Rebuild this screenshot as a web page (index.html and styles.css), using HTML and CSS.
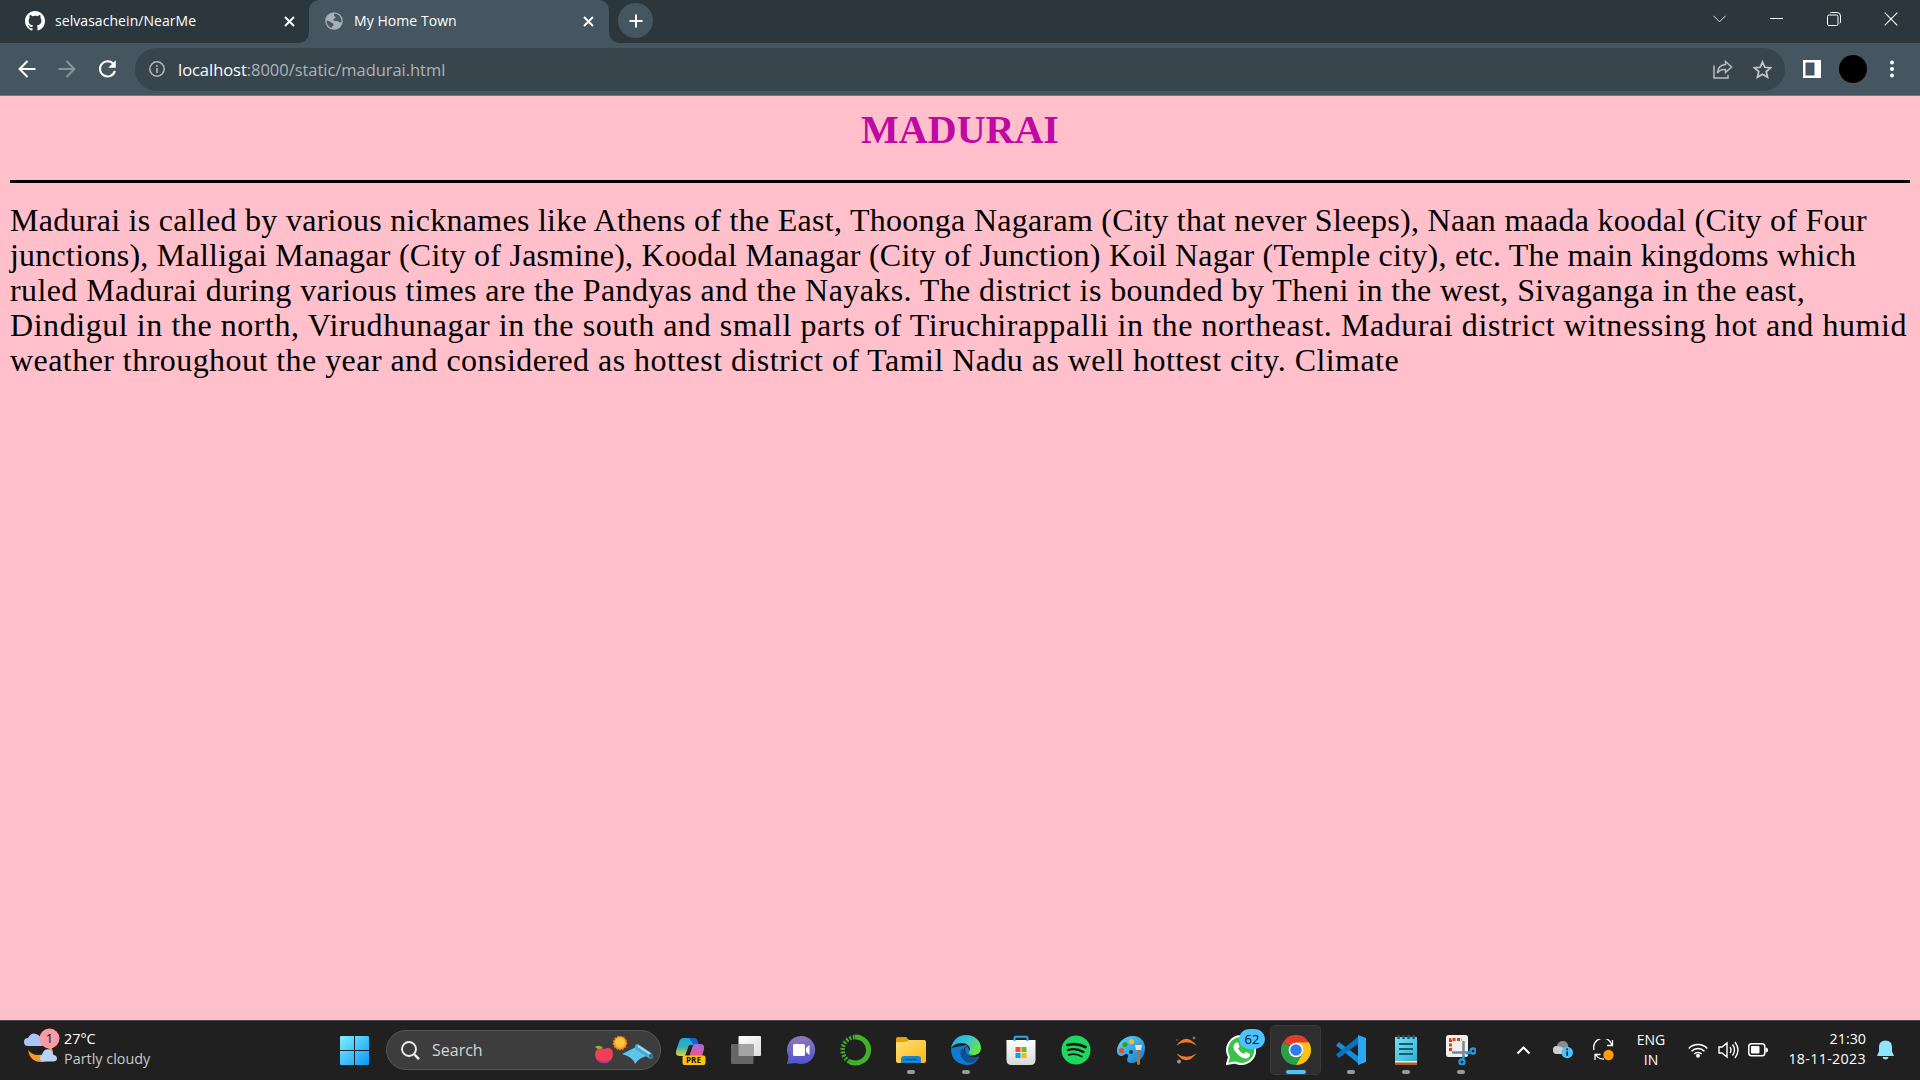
FILE: index.html
```html
<!DOCTYPE html>
<html lang="en">
<head>
<meta charset="utf-8">
<title>My Home Town</title>
<link rel="stylesheet" href="styles.css">
</head>
<body>
<div class="screen">
  <header class="tabstrip">
    <div class="tab tab-github">
      <svg class="fav" width="20" height="20" viewBox="0 0 16 16" fill="#fff"><path d="M8 0C3.58 0 0 3.58 0 8c0 3.54 2.29 6.53 5.47 7.59.4.07.55-.17.55-.38 0-.19-.01-.82-.01-1.49-2.01.37-2.53-.49-2.69-.94-.09-.23-.48-.94-.82-1.13-.28-.15-.68-.52-.01-.53.63-.01 1.08.58 1.23.82.72 1.21 1.87.87 2.33.66.07-.52.28-.87.51-1.07-1.78-.2-3.64-.89-3.64-3.95 0-.87.31-1.59.82-2.15-.08-.2-.36-1.02.08-2.12 0 0 .67-.21 2.2.82A7.4 7.4 0 0 1 8 3.86c.68 0 1.36.09 2 .27 1.53-1.04 2.2-.82 2.2-.82.44 1.1.16 1.92.08 2.12.51.56.82 1.27.82 2.15 0 3.07-1.87 3.75-3.65 3.95.29.25.54.73.54 1.48 0 1.07-.01 1.93-.01 2.2 0 .21.15.46.55.38A8.01 8.01 0 0 0 16 8c0-4.42-3.58-8-8-8z"/></svg>
      <span class="tab-title">selvasachein/NearMe</span>
      <svg class="close" width="11" height="11" viewBox="0 0 11 11"><path d="M1 1l9 9M10 1l-9 9" stroke="#fff" stroke-width="1.9"/></svg>
    </div>
    <div class="tab tab-active">
      <svg class="fav" width="18" height="18" viewBox="0 0 18 18"><circle cx="9" cy="9" r="8.8" fill="#a9afb6"/><path d="M9.500 1.500c-1 1.800-.5 3 .5 3.200s.8 1.500-.6 1.800-1.400 1.700-.2 2.200 3.300-.3 4.200.9c.7 1 2.400.8 3.100.3a7.600 7.600 0 0 0-7-8.400zM1.600 8.500c2 .3 3.200.8 4.700 2.100 1.200 1.100 2.700.8 2.200 2.500-.4 1.400-1.700 1.200-1.600 2.900A7.500 7.500 0 0 1 1.600 8.500z" fill="#4a5961"/></svg>
      <span class="tab-title">My Home Town</span>
      <svg class="close" width="11" height="11" viewBox="0 0 11 11"><path d="M1 1l9 9M10 1l-9 9" stroke="#fff" stroke-width="1.9"/></svg>
    </div>
    <div class="newtab"><svg width="14" height="14" viewBox="0 0 14 14"><path d="M7 .5v13M.5 7h13" stroke="#fff" stroke-width="2"/></svg></div>
    <div class="window-controls">
      <svg class="search-tabs" width="13" height="8" viewBox="0 0 13 8"><path d="M.5.8l6 6 6-6" fill="none" stroke="#dfe2e4"/></svg>
      <svg class="minimize" width="13" height="8" viewBox="0 0 13 8"><path d="M0 3.500h13" stroke="#fff"/></svg>
      <svg width="14" height="14" viewBox="0 0 14 14" fill="none" stroke="#fff"><rect x=".5" y="3" width="10.500" height="10.500" rx="1.500"/><path d="M3 1.200Q3.400.5 4.500.5H10Q13.500.5 13.500 4v6q0 1-.8 1.300"/></svg>
      <svg width="14" height="14" viewBox="0 0 14 14"><path d="M.7.700l12.600 12.600M13.300.700L.7 13.300" stroke="#fff" stroke-width="1.100"/></svg>
    </div>
  </header>

  <nav class="toolbar">
    <svg class="nav-back" width="18" height="18" viewBox="0 0 18 18"><path d="M17.500 9H2M9.500 1L1.600 9l7.900 8" fill="none" stroke="#fff" stroke-width="2"/></svg>
    <svg class="nav-fwd" width="18" height="18" viewBox="0 0 18 18"><path d="M.5 9H16M8.500 1l7.900 8-7.900 8" fill="none" stroke="#89959b" stroke-width="2"/></svg>
    <svg class="nav-reload" width="19" height="20" viewBox="0 0 20 20"><path d="M16.600 5.200A8 8 0 1 0 17.800 12" fill="none" stroke="#fff" stroke-width="2.200"/><path d="M18.700.800v8h-8z" fill="#fff"/></svg>
    <div class="omnibox">
      <svg width="16" height="16" viewBox="0 0 16 16"><circle cx="8" cy="8" r="7.200" fill="none" stroke="#b4babd" stroke-width="1.500"/><path d="M8 7v5M8 4v1.800" stroke="#b4babd" stroke-width="1.600"/></svg>
      <span class="url"><b>localhost</b>:8000/static/madurai.html</span>
      <svg class="share" width="20" height="19" viewBox="0 0 20 19" fill="none" stroke="#b8bdc0" stroke-width="1.500"><path d="M1 5.500V18h14v-3"/><path d="M12.500 1.500L18.500 7l-6 5.500V9.500Q7 9 4.500 13 5 5 12.500 4.500z"/></svg>
      <svg class="star" width="19" height="19" viewBox="0 0 24 24"><path d="M12 2.500l2.900 6.700 7.300.7-5.500 4.800 1.700 7.100L12 18l-6.400 3.800 1.700-7.100-5.500-4.800 7.300-.7z" fill="none" stroke="#c3c7c9" stroke-width="2.200"/></svg>
    </div>
    <svg class="panel" width="18" height="18" viewBox="0 0 18 18"><path fill-rule="evenodd" fill="#fff" d="M0 0h18v18H0zM2.500 2.500v13h9v-13z"/></svg>
    <span class="avatar"></span>
    <svg class="more" width="6" height="18" viewBox="0 0 6 18" fill="#fff"><circle cx="3" cy="2.500" r="2"/><circle cx="3" cy="9" r="2"/><circle cx="3" cy="15.500" r="2"/></svg>
  </nav>

  <main class="page">
    <h1>MADURAI</h1>
    <hr>
    <p>
      <span class="line l1">Madurai is called by various nicknames like Athens of the East, Thoonga Nagaram (City that never Sleeps), Naan maada koodal (City of Four</span>
      <span class="line l2">junctions), Malligai Managar (City of Jasmine), Koodal Managar (City of Junction) Koil Nagar (Temple city), etc. The main kingdoms which</span>
      <span class="line l3">ruled Madurai during various times are the Pandyas and the Nayaks. The district is bounded by Theni in the west, Sivaganga in the east,</span>
      <span class="line l4">Dindigul in the north, Virudhunagar in the south and small parts of Tiruchirappalli in the northeast. Madurai district witnessing hot and humid</span>
      <span class="line l5">weather throughout the year and considered as hottest district of Tamil Nadu as well hottest city. Climate</span>
    </p>
  </main>

  <footer class="taskbar">
    <div class="weather">
      <svg width="40" height="40" viewBox="0 0 40 40"><path d="M28 14q3 14-12 14-6 0-10-5 2 12 13 12 9 0 12-10z" fill="#f39a27"/><path d="M22 9q8 3 10 10l-5 4z" fill="#f5b32c"/><path d="M6 19a4 4 0 0 1 0-8q3-6 8-4 4 1 5 5 4 1 4 4 0 3-4 3z" fill="#a9c5f5"/><path d="M20 34.500a4 4 0 0 1 0-7q2-6 7-5 4 1 4 5 4 1 4 4 0 3-4 3z" fill="#b9d3f8"/><circle cx="27.500" cy="11.500" r="10" fill="#ff99a4"/></svg>
      <span class="weather-count">1</span>
      <div class="weather-text"><span class="temp">27°C</span><span class="cond">Partly cloudy</span></div>
    </div>
    <svg class="start" width="29" height="29" viewBox="0 0 29 29"><defs><linearGradient id="win" x1="0" y1="0" x2="29" y2="29" gradientUnits="userSpaceOnUse"><stop offset="0" stop-color="#7df0ff"/><stop offset="1" stop-color="#0a96fa"/></linearGradient></defs><path fill="url(#win)" d="M0 1q0-1 1-1h13v14H0zM15 0h13q1 0 1 1v13H15zM0 15h14v14H1q-1 0-1-1zM15 15h14v13q0 1-1 1H15z"/></svg>
    <div class="search">
      <svg width="19" height="19" viewBox="0 0 19 19" fill="none" stroke="#eee"><circle cx="8" cy="8" r="7" stroke-width="1.900"/><path d="M13 13l5 5.200" stroke-width="2.500"/></svg>
      <span>Search</span>
      <svg class="highlight" width="60" height="30" viewBox="0 0 60 30"><path d="M1 12q5-3 8 1-4 3-8-1z" fill="#83b92b"/><path d="M10 14q8-3 9 4 0 9-8 10Q2 28 1 20q0-8 9-6z" fill="#ee4057"/><path d="M3 24q7 4 14 0-3 5-7 4-5 0-7-4z" fill="#b63a91"/><circle cx="26" cy="8" r="6.500" fill="#f6a01b" stroke="#ef7c15" stroke-width="1.500" stroke-dasharray="2 1"/><circle cx="26" cy="7.500" r="5" fill="#fdc73c"/><path d="M28 19l14-7 11 9q-7 1-12 8-2-7-13-10z" fill="#5cc6ea"/><path d="M44 9l12 8q4 3 3 6-3 2-6-1L41 14q-1-5 3-5z" fill="#4ba9d1"/><path d="M44 11l12 8" stroke="#a7e4f8" stroke-width="2"/><circle cx="57" cy="21" r="2" fill="#286d91"/></svg>
    </div>
    <div class="apps">
      <div class="app"><svg width="30" height="30" viewBox="0 0 30 30"><defs><linearGradient id="cp1" x2="0" y2="1"><stop stop-color="#1aa6e8"/><stop offset=".5" stop-color="#35b1ad"/><stop offset="1" stop-color="#e6d53e"/></linearGradient><linearGradient id="cp2" x2="0" y2="1"><stop stop-color="#9b6be8"/><stop offset="1" stop-color="#fb5277"/></linearGradient></defs><path d="M8 3h9q4 0 5 5l1 3h-5q-2 0-3 3l-2 5q-1 2-4 2H4q-5 0-4-5l3-9q1-4 5-4z" fill="url(#cp1)"/><path d="M13 3h4q4 0 5 5l1 3h-5L15 6z" fill="#1662d4"/><path d="M13 10h5l-5 11H9z" fill="#202020"/><path d="M19 9h5q5 0 4 5l-2 8H13l3-9q1-4 3-4z" fill="url(#cp2)"/><rect x="6.500" y="20.500" width="23" height="9.500" rx="2" fill="#ffc20e"/></svg><b class="pre">PRE</b></div>
      <div class="app"><svg width="30" height="30" viewBox="0 0 30 30"><defs><linearGradient id="tv" x2="1" y2="1"><stop stop-color="#fff"/><stop offset="1" stop-color="#ddd"/></linearGradient></defs><rect x="7.500" y="1" width="22.500" height="20" rx="1" fill="url(#tv)"/><rect x="0" y="9" width="22.500" height="20" rx="1" fill="#666"/><path d="M7.500 9h15v12h-15z" fill="#a4a4a4"/></svg></div>
      <div class="app"><svg width="30" height="30" viewBox="0 0 30 30"><defs><linearGradient id="ch" x2="0" y2="1"><stop stop-color="#9277b9"/><stop offset="1" stop-color="#4d55d0"/></linearGradient></defs><path d="M15 1a14 14 0 1 1-5 27L1 29l1.500-7.500A14 14 0 0 1 15 1z" fill="url(#ch)"/><rect x="7" y="9" width="12" height="12" rx="1.500" fill="#fff"/><path d="M20 13l3.500-3v10L20 17z" fill="#fff"/></svg></div>
      <div class="app"><svg width="32" height="32" viewBox="0 0 32 32" fill="none" stroke="#43b02a"><path d="M15 3a13 13 0 1 1-5.500 24.500" stroke-width="5"/><path d="M9.500 27.500A13 13 0 0 1 15 3" stroke-width="4.500" stroke-dasharray="2 1.500"/><path d="M7 27A14 14 0 0 1 13 1.500M9 23A10 10 0 0 1 13 6" stroke="#202020" stroke-width="1" stroke-dasharray="2 2"/></svg></div>
      <div class="app"><svg width="30" height="30" viewBox="0 0 30 30"><defs><linearGradient id="fo" x2="1" y2="1"><stop stop-color="#ffe079"/><stop offset="1" stop-color="#f9b810"/></linearGradient></defs><path d="M0 4q0-2 2-2h8l3 3v5H0z" fill="#e5a100"/><path d="M0 7h10l3-2h15q2 0 2 2v19q0 2-2 2H2q-2 0-2-2z" fill="url(#fo)"/><path d="M5 28v-4q0-3 3-3h14q3 0 3 3v4z" fill="#1a84d2"/><path d="M9 24.500h12" stroke="#0d589c" stroke-width="1.500"/></svg><i class="dot"></i></div>
      <div class="app"><svg width="30" height="30" viewBox="0 0 30 30"><defs><linearGradient id="ed" x2="1" y2=".5"><stop stop-color="#23a9e8"/><stop offset=".5" stop-color="#35c2d7"/><stop offset="1" stop-color="#65e34c"/></linearGradient></defs><path d="M0 13q0 9 5 13 5 4 12 4 8-1 11-8l-8-2-4-10z" fill="#0c7cd3"/><path d="M0 13C2 4 8 0 15 0c9 0 15 6 15 13 0 5-4 7-7 7-4 0-6-1-5-3 3-5-2-9-7-9Q4 8 0 13z" fill="url(#ed)"/><path d="M18 12q-4-1-4 3 1 7 8 6 4 0 6-1-2 3-5 3-9 0-10-8 0-5 5-3z" fill="#202020"/><path d="M12 13q-4 3-2 8 3 7 9 7 6-1 9-7-4 2-8 1-6-2-7-7z" fill="#134e93"/></svg><i class="dot"></i></div>
      <div class="app"><svg width="30" height="30" viewBox="0 0 30 30"><defs><linearGradient id="st" x2="0" y2="1"><stop stop-color="#fff"/><stop offset="1" stop-color="#d9d9d9"/></linearGradient></defs><path d="M.5 5h29v20q0 5-5 5h-19q-5 0-5-5z" fill="url(#st)"/><path d="M8.500 6V3q0-1.200 1.200-1.200h10.600q1.200 0 1.200 1.200v3" fill="none" stroke="#28a8ea" stroke-width="2"/><path d="M9.500 12h5v5h-5z" fill="#f05023"/><path d="M15.500 12h5v5h-5z" fill="#7db902"/><path d="M9.500 18h5v5h-5z" fill="#04a4ef"/><path d="M15.500 18h5v5h-5z" fill="#fdb900"/></svg></div>
      <div class="app"><svg width="30" height="30" viewBox="0 0 30 30"><circle cx="15" cy="15" r="14.500" fill="#1ed760"/><g fill="none" stroke="#191414" stroke-linecap="round"><path d="M6.500 10q9-2.500 18 2" stroke-width="2.800"/><path d="M7 15q8-2.500 15.500 2" stroke-width="2.300"/><path d="M7.700 19.800q7-2 13 1.700" stroke-width="1.900"/></g></svg></div>
      <div class="app"><svg width="30" height="30" viewBox="0 0 30 30"><defs><linearGradient id="pa" x2="1" y2="1"><stop stop-color="#68d6f7"/><stop offset="1" stop-color="#1277cf"/></linearGradient></defs><path d="M17 1c8 0 12 6 12 12 0 9-6 15-14 15-5 0-4-4-3-6 1-3-2-4-4-2s-7 1-7-4C1 8 8 1 17 1z" fill="url(#pa)"/><circle cx="15.500" cy="6.500" r="2.600" fill="#fdc100"/><circle cx="9" cy="9.500" r="2.600" fill="#2ea32d"/><circle cx="5.500" cy="15.500" r="2.600" fill="#d9532c"/><circle cx="15" cy="17" r="2" fill="#123c5c"/><path d="M19 10h7l-1 5h-5z" fill="#f2dcc2"/><path d="M21 15h3v14q-1.500 2-3 0z" fill="#b87027"/></svg></div>
      <div class="app"><svg width="30" height="30" viewBox="0 0 30 30"><path d="M5.500 10.500q9.500-13.500 20 0-10-6.500-20 0zM5.500 18.500q9.500 13.500 20 0-10 6.500-20 0z" fill="#f37726"/><circle cx="23" cy="3" r="1.400" fill="#777"/><circle cx="6" cy="5" r="1" fill="#555"/><circle cx="8" cy="26.500" r="1.900" fill="#999"/></svg></div>
      <div class="app"><svg width="30" height="30" viewBox="0 0 30 30"><path d="M15 1a14 14 0 1 1-6 26.500L1 29l2-7A14 14 0 0 1 15 1z" fill="#38c44b" stroke="#fff" stroke-width="2"/><path d="M10 7.500q2-.5 2.500 1l1 3q0 1-1.500 2 2 4 6 5.500 1-2 2-2l4 2q0 4-4 4.500-4 0-8-4-5-4.500-4.500-8 .5-3 2.500-4z" fill="#fff"/></svg><span class="badge">62</span></div>
      <div class="app app-active"><svg width="30" height="30" viewBox="0 0 30 30"><path d="M15 15L2 7.500A15 15 0 0 1 28 7.500z" fill="#e43e2b"/><path d="M2 7.500A15 15 0 0 0 15 30l6.500-11.200L15 15z" fill="#2b9f49"/><path d="M28 7.500A15 15 0 0 1 15 30l6.500-11.200L15 7.500z" fill="#fbc116"/><circle cx="15" cy="15" r="7.300" fill="#fff"/><circle cx="15" cy="15" r="5.800" fill="#317bed"/></svg><i class="dot wide"></i></div>
      <div class="app"><svg width="30" height="30" viewBox="0 0 30 30"><path d="M3 7L23 22v7L0 10.500z" fill="#168cd7"/><path d="M3 23L23 8V1L0 19.500z" fill="#0874bd"/><path d="M22 0l8 3v24l-8 3z" fill="#2aa8f2"/></svg><i class="dot"></i></div>
      <div class="app"><svg width="30" height="30" viewBox="0 0 30 30"><defs><linearGradient id="np" x2="1" y2="1"><stop stop-color="#79dff0"/><stop offset="1" stop-color="#31b1d0"/></linearGradient></defs><path d="M4 26h22v4H4z" fill="#b45f21"/><path d="M4 25h22v2.500H4z" fill="#eee"/><path d="M4 2h22v24H4z" fill="url(#np)"/><path d="M7.500 0v4M12.500 0v4M17.500 0v4M22.500 0v4" stroke="#155e75" stroke-width="2.500"/><path d="M8 9h14M8 14h14M8 19h14" stroke="#105d79" stroke-width="2"/></svg><i class="dot"></i></div>
      <div class="app"><svg width="30" height="30" viewBox="0 0 30 30"><rect width="22" height="22" rx="2.500" fill="#f0f0f0"/><path d="M4.500 16V4.500H16" fill="none" stroke="#dc3e10" stroke-width="3" stroke-dasharray="3 1.500"/><path d="M17.500 6v16M6 17.500h17" stroke="#7d8791" stroke-width="2.500"/><g fill="none" stroke="#1d9ae0" stroke-width="2.300"><circle cx="27" cy="16" r="2.500"/><circle cx="16" cy="27" r="2.500"/><path d="M20 18.500l5-1M18 20.500l-1 4"/></g></svg><i class="dot"></i></div>
    </div>
    <div class="tray">
      <svg class="tray-up" width="15" height="10" viewBox="0 0 15 10"><path d="M1.500 8.500l6-6 6 6" fill="none" stroke="#fff" stroke-width="2"/></svg>
      <svg class="tray-cloud" width="20" height="18" viewBox="0 0 20 18"><path d="M4 13q-4 0-4-4t4-4q1-5 6-5 4 0 5 4l1 6-9 3z" fill="#8b8b8b"/><path d="M0 9q0-4 4-4 3 0 9 3l-4 5H4q-4 0-4-4z" fill="#cfcfcf"/><circle cx="14.200" cy="11.500" r="5.800" fill="#4cc2ff"/><path d="M14.200 10.500v4.200M14.200 7.500v1.800" stroke="#123" stroke-width="1.700"/></svg>
      <svg class="tray-sync" width="22" height="22" viewBox="0 0 22 22"><g fill="none" stroke="#fff" stroke-width="1.300"><path d="M1 11A9 9 0 0 1 19 6M19.500 1v5.500H14"/><path d="M2 21v-5.500h5.500M3 16q3 4.500 8 4"/></g><circle cx="15.500" cy="16" r="5.200" fill="#ff9a0a"/></svg>
      <div class="lang"><span>ENG</span><span>IN</span></div>
      <svg class="tray-wifi" width="20" height="16" viewBox="0 0 20 16" fill="none" stroke="#fff" stroke-width="1.500"><path d="M.7 6.500a13 13 0 0 1 18.600 0M3.500 9.300a9 9 0 0 1 13 0M6.300 12a5.200 5.200 0 0 1 7.400 0"/><circle cx="10" cy="13.800" r="1.200" fill="#fff"/></svg>
      <svg class="tray-vol" width="21" height="18" viewBox="0 0 21 18" fill="none" stroke="#fff" stroke-width="1.400"><path d="M1 6v6h3l5 4V2L4 6zM12 6q2 3 0 6M14.500 3.500q4 5.500 0 11M17 1q6 8 0 16"/></svg>
      <svg class="tray-bat" width="20" height="14" viewBox="0 0 20 14"><rect x=".8" y=".8" width="16" height="12" rx="2.800" fill="none" stroke="#fff" stroke-width="1.500"/><rect x="3" y="3" width="8.500" height="7.600" rx="1" fill="#fff"/><path d="M17.500 4.500q2.500 0 2.500 2.500t-2.500 2.500z" fill="#fff"/></svg>
      <div class="clock"><span class="time">21:30</span><span class="date">18-11-2023</span></div>
      <svg class="tray-bell" width="17" height="20" viewBox="0 0 17 20" fill="#8fe5ff"><path d="M8.500.500Q15 .500 15 7v4.500l1.700 3.500v1H.3v-1L2 11.500V7Q2 .500 8.500.500zM5.500 17h6q-.5 2.500-3 2.500t-3-2.500z"/></svg>
    </div>
  </footer>
</div>
</body>
</html>
```
FILE: styles.css
```css
* { box-sizing: border-box; }
html, body { margin: 0; }
body { width: 1920px; height: 1080px; overflow: hidden; font-family: "Open Sans", "Noto Sans", sans-serif; }
svg { display: block; flex: none; }
.screen { display: flex; flex-direction: column; height: 1080px; }

.tabstrip { display: flex; height: 43px; background: #2c373d; }
.tab { display: flex; align-items: center; height: 43px; padding-bottom: 1px; color: #fff; font-size: 14px; white-space: nowrap; }
.tab-github { width: 309px; padding-left: 25px; padding-right: 14px; }
.tab-active { position: relative; width: 300px; padding-left: 16px; padding-right: 15px; border-radius: 10px 10px 0 0; background: #455660; }
.tab-active::before, .tab-active::after { content: ""; position: absolute; bottom: 0; width: 10px; height: 10px; }
.tab-active::before { left: -10px; background: radial-gradient(circle at 0 0, #2c373d 9.5px, #455660 10px); }
.tab-active::after { right: -10px; background: radial-gradient(circle at 100% 0, #2c373d 9.5px, #455660 10px); }
.tab-title { flex: 1; margin-left: 10px; padding-bottom: 2px; letter-spacing: 0.06px; }
.tab-active .tab-title { margin-left: 11px; }
.newtab { display: flex; align-items: center; justify-content: center; width: 35px; height: 35px; margin: 3px 0 0 9px; border-radius: 50%; background: #455660; }
.window-controls { display: flex; align-items: center; gap: 43px; height: 37px; margin-left: auto; padding-right: 22px; }
.search-tabs { margin-right: 1px; }
.minimize { margin-right: 1px; }

.toolbar { display: flex; align-items: center; height: 53px; padding-left: 18px; background: #455660; border-bottom: 1px solid #6b7982; }
.nav-fwd { margin-left: 22px; }
.nav-reload { margin-left: 22px; }
.omnibox { display: flex; align-items: center; width: 1650px; height: 43px; margin-left: 18px; padding: 0 13px 0 14px; border-radius: 22px; background: #39454c; }
.url { margin-left: 13px; color: #acb4b8; font-size: 16.5px; letter-spacing: -0.04px; white-space: nowrap; }
.url b { color: #fff; font-weight: 400; }
.share { margin-left: auto; }
.star { margin-left: 20px; }
.panel { margin-left: 18px; }
.avatar { width: 28px; height: 28px; margin-left: 18px; border-radius: 50%; background: #000; }
.more { margin-left: 22px; }

.page { flex: 1; padding: 11px 10px 0; background: #ffc0cb; overflow: hidden; }
.page h1 { margin: 0; color: #c008a4; font: bold 40px/46px "Liberation Serif", serif; text-align: center; }
.page hr { height: 3px; margin: 27px 0 20px; border: 0; background: #000; }
.page p { margin: 0; font: 32px/35px Georgia, "Liberation Serif", serif; color: #000; }
.line { display: block; white-space: nowrap; }
.l1 { letter-spacing: 0.275px; }
.l2 { letter-spacing: 0.234px; }
.l3 { letter-spacing: 0.403px; }
.l4 { letter-spacing: 0.561px; }
.l5 { letter-spacing: 0.45px; }

.taskbar { display: flex; align-items: center; height: 60px; padding-bottom: 1px; background: #202020; border-top: 1px solid #444; color: #fff; }
.weather { position: relative; display: flex; width: 340px; height: 46px; padding-left: 22px; }
.weather-count { position: absolute; left: 44.5px; top: 2px; width: 10px; color: #111; font-size: 13px; line-height: 18px; text-align: center; }
.weather-text { display: flex; flex-direction: column; margin: 2px 0 0 2px; font-size: 14.4px; line-height: 20px; white-space: nowrap; }
.cond { color: #c9c9c9; }
.search { display: flex; align-items: center; width: 275px; height: 40px; margin-left: 17px; padding: 0 6px 0 14px; border: 1px solid #565656; border-radius: 20px; background: #3d3d3d; color: #d5d5d5; font-size: 16px; }
.search span { margin-left: 12px; }
.highlight { margin-left: auto; }
.apps { display: flex; margin-left: 2px; }
.app { position: relative; display: flex; align-items: center; justify-content: center; width: 55px; height: 50px; }
.app-active::before { content: ""; position: absolute; inset: 0 2px; border: 1px solid #3a3a3a; border-radius: 5px; background: #2e2e2e; }
.app svg { position: relative; }
.dot { position: absolute; bottom: 1px; left: 24px; width: 8px; height: 4px; border-radius: 2px; background: #9a9a9a; }
.dot.wide { left: 18px; width: 20px; background: #4cc2ff; }
.pre { position: absolute; left: 19px; top: 29px; width: 23px; color: #111; font-size: 8px; line-height: 12px; text-align: center; }
.badge { position: absolute; left: 26px; top: 4px; width: 26px; height: 20px; border-radius: 10px; background: #4cc2ff; color: #111; font-size: 13px; line-height: 20px; text-align: center; }
.tray { display: flex; align-items: center; flex: 1; padding-left: 28px; }
.tray-cloud { margin-left: 22px; }
.tray-sync { margin-left: 20px; }
.lang { display: flex; flex-direction: column; width: 32px; margin-left: 20px; font-size: 14px; line-height: 20px; align-items: center; }
.tray-wifi { margin-left: 21px; }
.tray-vol { margin-left: 10px; }
.tray-bat { margin-left: 9px; }
.clock { display: flex; flex-direction: column; width: 84px; margin: 0 0 2px 14px; align-items: flex-end; font-size: 14.3px; line-height: 20px; white-space: nowrap; }
.date { letter-spacing: 0.3px; }
.tray-bell { margin-left: 11px; }
```
